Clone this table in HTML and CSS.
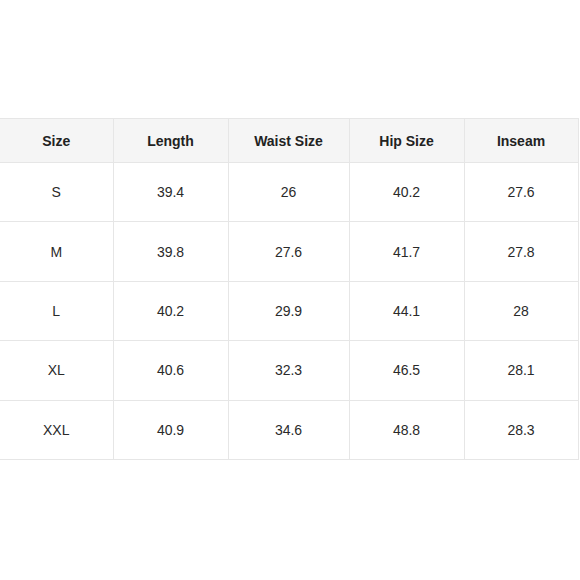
FILE: index.html
```html
<!DOCTYPE html>
<html>
<head>
<meta charset="utf-8">
<link rel="stylesheet" href="styles.css">
</head>
<body>
<table class="size-table">
  <colgroup>
    <col class="c1"><col class="c2"><col class="c3"><col class="c4"><col class="c5">
  </colgroup>
  <thead>
    <tr class="head-row"><th>Size</th><th>Length</th><th>Waist Size</th><th>Hip Size</th><th>Inseam</th></tr>
  </thead>
  <tbody>
    <tr class="row"><td>S</td><td>39.4</td><td>26</td><td>40.2</td><td>27.6</td></tr>
    <tr class="row"><td>M</td><td>39.8</td><td>27.6</td><td>41.7</td><td>27.8</td></tr>
    <tr class="row"><td>L</td><td>40.2</td><td>29.9</td><td>44.1</td><td>28</td></tr>
    <tr class="row"><td>XL</td><td>40.6</td><td>32.3</td><td>46.5</td><td>28.1</td></tr>
    <tr class="row"><td>XXL</td><td>40.9</td><td>34.6</td><td>48.8</td><td>28.3</td></tr>
  </tbody>
</table>
</body>
</html>
```

FILE: styles.css
```css
html, body {
  margin: 0;
  padding: 0;
  background: #ffffff;
}
body {
  padding-top: 118px;
  font-family: "Liberation Sans", Arial, sans-serif;
  color: #2a2a2a;
}
.size-table {
  border-collapse: collapse;
  table-layout: fixed;
  width: 578px;
  font-size: 14px;
}
.c1 { width: 113px; }
.c2 { width: 115px; }
.c3 { width: 121px; }
.c4 { width: 115px; }
.c5 { width: 114px; }
.size-table th,
.size-table td {
  border: 1px solid #e6e6e6;
  text-align: center;
  vertical-align: middle;
  padding: 0;
}
.size-table th:first-child,
.size-table td:first-child {
  border-left: 0;
}
.size-table th {
  font-weight: bold;
  background: #f5f5f5;
  color: #222222;
}
.head-row { height: 44px; }
.row { height: 59.4px; }
```
